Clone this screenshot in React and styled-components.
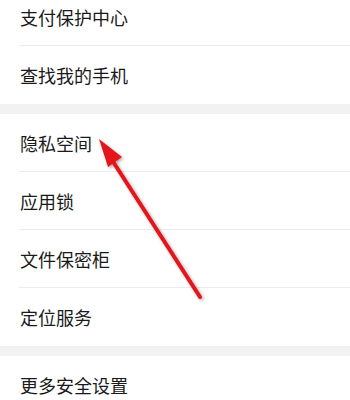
import React from 'react';
import styled, { createGlobalStyle } from 'styled-components';

const GlobalStyle = createGlobalStyle`
  html, body {
    margin: 0;
    padding: 0;
    background: #ffffff;
    overflow: hidden;
  }
  body {
    font-family: "Noto Sans CJK SC", "Noto Sans", sans-serif;
  }
`;

const Page = styled.div`
  position: relative;
  width: 350px;
  height: 400px;
  overflow: hidden;
  background: #ffffff;
`;

const List = styled.div`
  display: flex;
  flex-direction: column;
  margin-top: -12px;
`;

const Group = styled.section`
  display: flex;
  flex-direction: column;
  background: #ffffff;
`;

const Gap = styled.div`
  height: 10px;
  background: #f2f2f2;
`;

const Row = styled.div`
  height: 58px;
  display: flex;
  align-items: center;
  margin-left: 19px;
  box-sizing: border-box;
  border-bottom: ${p => (p.last ? 'none' : '1px solid #ececec')};
`;

const Label = styled.span`
  font-size: 18px;
  color: #1a1a1a;
  padding-left: 1px;
  line-height: 1;
`;

const ArrowLayer = styled.svg`
  position: absolute;
  left: 0;
  top: 0;
  pointer-events: none;
`;

const groups = [
  ['支付保护中心', '查找我的手机'],
  ['隐私空间', '应用锁', '文件保密柜', '定位服务'],
  ['更多安全设置'],
];

export default function App() {
  return (
    <>
      <GlobalStyle />
      <Page>
        <List>
          {groups.map((items, gi) => (
            <React.Fragment key={gi}>
              {gi > 0 && <Gap />}
              <Group>
                {items.map((t, i) => (
                  <Row key={t} last={i === items.length - 1}>
                    <Label>{t}</Label>
                  </Row>
                ))}
              </Group>
            </React.Fragment>
          ))}
        </List>
        <ArrowLayer width="350" height="400" viewBox="0 0 350 400">
          <defs>
            <filter id="shadow" x="-20%" y="-20%" width="140%" height="140%">
              <feDropShadow dx="1.5" dy="1.5" stdDeviation="1.5" floodColor="#000" floodOpacity="0.35" />
            </filter>
          </defs>
          <g filter="url(#shadow)">
            <line x1="200" y1="297" x2="112" y2="160" stroke="#e3161c" strokeWidth="4" strokeLinecap="round" />
            <polygon points="99,139 122,157 108,167" fill="#e3161c" />
          </g>
        </ArrowLayer>
      </Page>
    </>
  );
}
